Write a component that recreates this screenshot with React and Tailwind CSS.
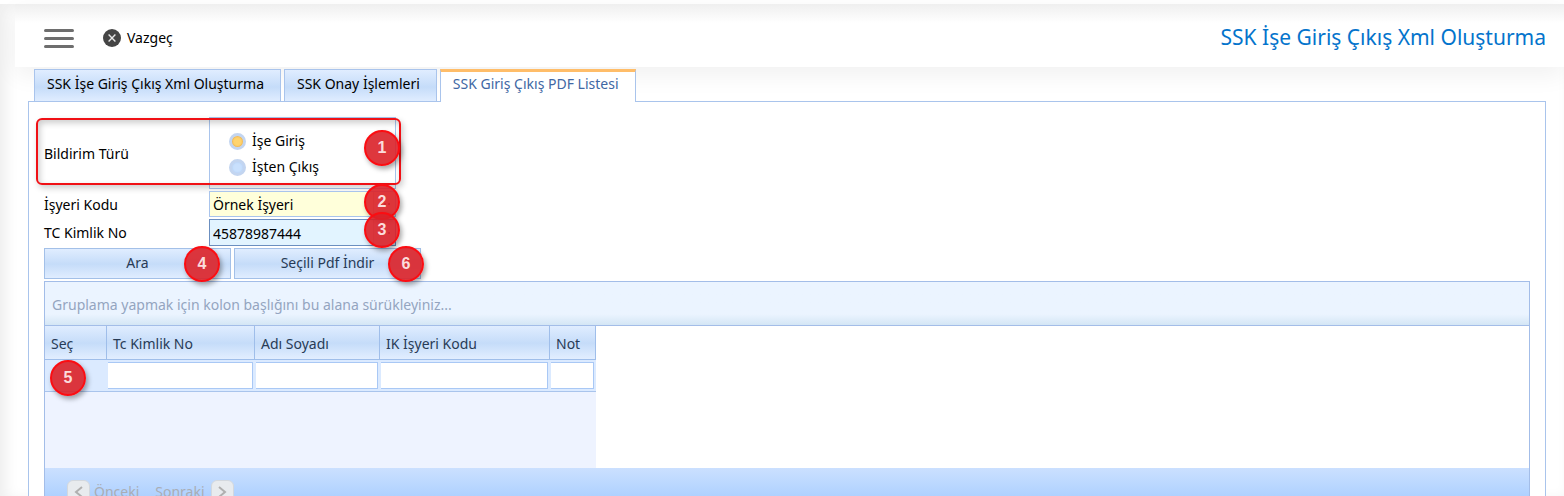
import { useState } from "react";
import clsx from "clsx";

const tabs = ["SSK İşe Giriş Çıkış Xml Oluşturma", "SSK Onay İşlemleri", "SSK Giriş Çıkış PDF Listesi"];

const columns = [
  { title: "Seç", width: "w-[62px]" },
  { title: "Tc Kimlik No", width: "w-[148px]" },
  { title: "Adı Soyadı", width: "w-[125px]" },
  { title: "IK İşyeri Kodu", width: "w-[170px]" },
  { title: "Not", width: "w-[46px]" },
];

const Step = ({ no, className }) => (
  <span
    className={clsx(
      "absolute z-10 flex size-9 items-center justify-center rounded-full border-2 border-[#fb0d12] bg-[#da2128]/90 font-['Liberation_Sans',sans-serif] text-base font-bold text-[#fbdcdc] shadow-[2px_3px_5px_rgba(0,0,0,0.35)]",
      className
    )}
  >
    {no}
  </span>
);

const Radio = ({ label, checked, onChange }) => (
  <label className="flex h-[26px] items-center gap-1.5">
    <input
      type="radio"
      name="bildirim"
      checked={checked}
      onChange={onChange}
      className="size-[17px] appearance-none rounded-full border-3 border-[#c3d5f0] bg-[#c9e0fd] shadow-[inset_0_0_2px_#a9c8f0] checked:bg-[#ffd46e] checked:shadow-[inset_0_0_2px_#d98a2b]"
    />
    {label}
  </label>
);

const Dots = () => (
  <svg viewBox="0 0 12 4" className="mx-auto h-1 w-3" fill="#555">
    <circle cx="2" cy="2" r="1" />
    <circle cx="6" cy="2" r="1" />
    <circle cx="10" cy="2" r="1" />
  </svg>
);

const ActionButton = ({ children }) => (
  <button className="h-[31px] w-[187px] border border-[#a3c0e8] bg-linear-to-b from-[#e0edff] from-0% via-[#c5dcf9] via-52% to-[#e0edff] pb-0.5 text-[#283b56]">
    {children}
  </button>
);

const App = () => {
  const [type, setType] = useState("giris");
  const [activeTab, setActiveTab] = useState(2);

  return (
    <div className="h-screen overflow-hidden bg-white pt-1 font-['Noto_Sans',sans-serif] text-sm text-black">
      <div className="h-full pl-[15px] shadow-[inset_6px_4px_14px_rgba(0,0,0,0.07)]">
        {/* Header */}
        <header className="flex h-[63px] items-center bg-linear-to-b from-[#efefef] to-white to-30% pr-[18px] pl-[29px] shadow-[0_8px_24px_rgba(0,0,0,0.06)]">
          <button aria-label="Menü" className="flex w-[30px] flex-col gap-[5px] pt-1.5">
            <span className="h-[3px] rounded-full bg-[#6e6e6e]" />
            <span className="h-[3px] rounded-full bg-[#6e6e6e]" />
            <span className="h-[3px] rounded-full bg-[#6e6e6e]" />
          </button>
          <button className="ml-[29px] flex items-center gap-1.5 pt-1">
            <svg viewBox="0 0 18 18" className="size-[18px]">
              <circle cx="9" cy="9" r="9" fill="#454545" />
              <path d="M5.6 5.6l6.8 6.8M12.4 5.6l-6.8 6.8" stroke="#e6e6e6" strokeWidth="1.4" />
            </svg>
            Vazgeç
          </button>
          <h1 className="ml-auto pt-0.5 text-[21px] text-[#0474cc]">SSK İşe Giriş Çıkış Xml Oluşturma</h1>
        </header>

        <main className="relative mr-[18px] ml-[13px] pt-0.5">
          {/* Tabs */}
          <div role="tablist" className="relative z-10 -mb-px flex items-start gap-[3px] pl-1.5">
            {tabs.map((tab, i) => (
              <button
                key={tab}
                role="tab"
                aria-selected={i === activeTab}
                onClick={() => setActiveTab(i)}
                className={clsx(
                  "border border-[#a9c4ec] pr-4 pl-3",
                  i === activeTab
                    ? "h-[33px] border-t-3 border-b-0 border-t-[#ffbd69] bg-white pb-1.5 text-[#4067a4]"
                    : "h-[33px] bg-linear-to-b from-[#e0edff] from-0% via-[#c5dcf9] via-55% to-[#e0edff] pb-1"
                )}
              >
                {tab}
              </button>
            ))}
          </div>

          <div className="flex h-[480px] flex-col gap-0.5 border border-[#a9c4ec] bg-white px-[15px] pt-[15px]">
            {/* Search form */}
            <div className="grid grid-cols-[165px_187px] items-center gap-y-0.5">
              <span className="pt-0.5">Bildirim Türü</span>
              <div className="relative flex h-[72px] flex-col justify-center border border-[#a9c4ec] pt-0.5 pl-[19px]">
                <Radio label="İşe Giriş" checked={type === "giris"} onChange={() => setType("giris")} />
                <Radio label="İşten Çıkış" checked={type === "cikis"} onChange={() => setType("cikis")} />
                <div className="pointer-events-none absolute top-0 -left-[174px] h-[67px] w-[365px] rounded-md border-2 border-[#f01015] shadow-[2px_3px_6px_rgba(0,0,0,0.2),inset_2px_3px_6px_rgba(0,0,0,0.2)]" />
                <Step no={1} className="top-3 -right-[5px]" />
              </div>

              <label htmlFor="isyeri" className="pt-0.5">İşyeri Kodu</label>
              <div className="relative flex h-[26px] border border-[#a9c4ec] bg-[#ffffda]">
                <input id="isyeri" defaultValue="Örnek İşyeri" className="min-w-0 flex-1 px-[3px] pt-0.5 outline-none" />
                <button aria-label="İşyeri seç" className="w-[22px] border-l border-[#d6d6c0] bg-[#f3f3da]">
                  <Dots />
                </button>
                <Step no={2} className="-top-2 -right-[5px]" />
              </div>

              <label htmlFor="tc">TC Kimlik No</label>
              <div className="relative flex h-[27px] border border-[#6b8fc0] bg-[#e2f4ff]">
                <input id="tc" defaultValue="45878987444" className="min-w-0 flex-1 px-[3px] pt-0.5 outline-none" />
                <button aria-label="Kişi seç" className="w-[22px] border-l border-[#b9cfe0] bg-[#d8e9f5]">
                  <Dots />
                </button>
                <Step no={3} className="-top-2 -right-[5px]" />
              </div>
            </div>

            <div className="flex gap-[3px]">
              <div className="relative">
                <ActionButton>Ara</ActionButton>
                <Step no={4} className="-top-0.5 right-[11px]" />
              </div>
              <div className="relative">
                <ActionButton>Seçili Pdf İndir</ActionButton>
                <Step no={6} className="-top-0.5 -right-[3px]" />
              </div>
            </div>

            {/* Grid */}
            <div className="flex flex-1 flex-col border border-[#a3bde8]">
              <div className="flex h-11 items-center border-b border-[#a3bde8] bg-linear-to-b from-[#ebf4ff] from-75% to-[#d4e6f5] px-[7px] pt-0.5 text-[#94a5bf]">
                Gruplama yapmak için kolon başlığını bu alana sürükleyiniz...
              </div>
              <div className="h-[142px] w-[551px] bg-[#eef3ff]">
                <table className="w-full table-fixed border-separate border-spacing-0">
                  <thead>
                    <tr className="h-[34px]">
                      {columns.map((col) => (
                        <th
                          key={col.title}
                          className={clsx(
                            "border-r border-b border-[#9fbeea] bg-linear-to-b from-[#e0edff] from-0% via-[#c5dcf9] via-52% to-[#e2eeff] px-1.5 pt-0.5 pb-0 text-left font-normal text-[#283b56]",
                            col.width
                          )}
                        >
                          {col.title}
                        </th>
                      ))}
                    </tr>
                  </thead>
                  <tbody>
                    <tr className="h-8 bg-[#dbeaff]">
                      {columns.map((col, i) => (
                        <td key={col.title} className="relative border-b border-[#a9c4ec] p-0 pr-0.5 pl-px">
                          {i === 0 ? (
                            <Step no={5} className="top-0 left-[5px]" />
                          ) : (
                            <input
                              aria-label={col.title}
                              className="block h-[27px] w-full border border-l-0 border-[#a9c8f5] bg-white px-1"
                            />
                          )}
                        </td>
                      ))}
                    </tr>
                  </tbody>
                </table>
              </div>

              {/* Pager */}
              <div className="flex flex-1 items-start gap-4 bg-[linear-gradient(to_bottom,#cbe0ff,#abcfff_32px)] pt-3 pl-[22px] text-[#a9adb5]">
                <button disabled className="flex items-center gap-1">
                  <span className="flex size-[23px] items-center justify-center rounded-md border border-[#d3d8de] bg-[#e8ebee]">
                    <svg viewBox="0 0 10 12" className="h-3 w-2.5" fill="none" stroke="#b0b0b0" strokeWidth="2">
                      <path d="M8 1L2 6l6 5" />
                    </svg>
                  </span>
                  Önceki
                </button>
                <button disabled className="flex items-center gap-1.5">
                  Sonraki
                  <span className="flex size-[23px] items-center justify-center rounded-md border border-[#d3d8de] bg-[#e8ebee]">
                    <svg viewBox="0 0 10 12" className="h-3 w-2.5" fill="none" stroke="#b0b0b0" strokeWidth="2">
                      <path d="M2 1l6 5-6 5" />
                    </svg>
                  </span>
                </button>
              </div>
            </div>
          </div>
        </main>
      </div>
    </div>
  );
};

export default App;
